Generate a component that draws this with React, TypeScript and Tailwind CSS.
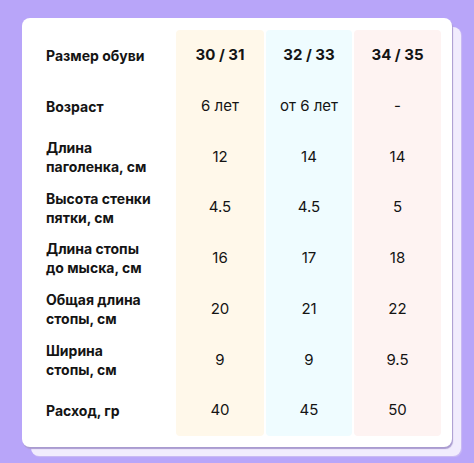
const labels: string[][] = [
  ["Размер обуви"],
  ["Возраст"],
  ["Длина", "паголенка, см"],
  ["Высота стенки", "пятки, см"],
  ["Длина стопы", "до мыска, см"],
  ["Общая длина", "стопы, см"],
  ["Ширина", "стопы, см"],
  ["Расход, гр"],
];

const sizes = [
  { bg: "bg-[#fff8ea]", w: "w-[88px]", values: ["30 / 31", "6 лет", "12", "4.5", "16", "20", "9", "40"] },
  { bg: "bg-[#effcff]", w: "w-[86px]", values: ["32 / 33", "от 6 лет", "14", "4.5", "17", "21", "9", "45"] },
  { bg: "bg-[#fef3f2]", w: "w-[87px]", values: ["34 / 35", "-", "14", "5", "18", "22", "9.5", "50"] },
];

export default function App() {
  return (
    <div className="w-[474px] h-[463px] bg-[#b8a5f9] pt-[18px] pl-[22px] font-['Inter',sans-serif] text-[#141414]">
      <div className="w-[430px] h-[429px] bg-white rounded-[8px] shadow-[1px_2px_1px_#a99bd0,9px_9px_0_#f1ecfd,10px_10px_1px_#cbbcf3] flex pt-[12px] pb-[11px]">
        <div className="w-[154px] pl-[24px] flex flex-col">
          {labels.map((l, i) => (
            <div key={i} className="h-[50.75px] flex flex-col justify-center text-[14px] leading-[19px] font-bold">
              {l.map((t) => (
                <span key={t}>{t}</span>
              ))}
            </div>
          ))}
        </div>
        <div className="flex gap-[2px]">
          {sizes.map((s, ci) => (
            <div key={ci} className={`${s.bg} ${s.w} rounded-[4px] flex flex-col`}>
              {s.values.map((v, i) => (
                <div
                  key={i}
                  className={`h-[50.75px] flex items-center justify-center text-[15px] ${i === 0 ? "font-bold" : "font-normal"}`}
                >
                  {v}
                </div>
              ))}
            </div>
          ))}
        </div>
      </div>
    </div>
  );
}
